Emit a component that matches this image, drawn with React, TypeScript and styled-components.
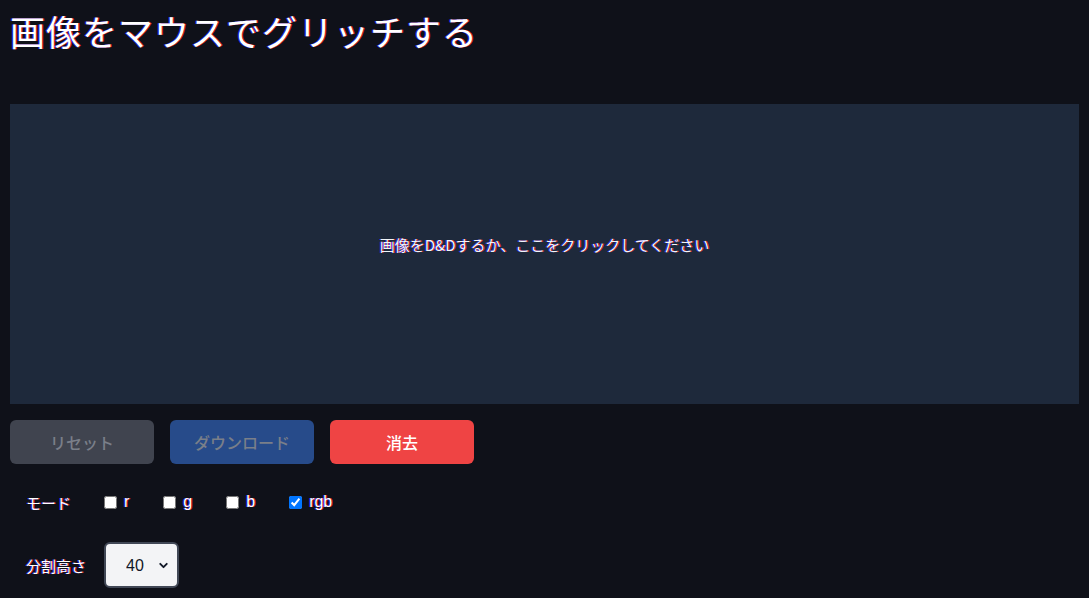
import React, { useState } from "react";
import styled, { createGlobalStyle } from "styled-components";
import { ChevronDown } from "lucide-react";

const Global = createGlobalStyle`
  html, body { margin: 0; padding: 0; background: #0f1119; }
  body {
    font-family: "Noto Sans CJK JP", "Noto Sans", "Liberation Sans", sans-serif;
    color: #ffffff;
  }
  * { box-sizing: border-box; }
`;

const glitch = "-1px 0 rgba(40, 40, 255, 0.85), 1px 0 rgba(255, 30, 30, 0.85)";

const Page = styled.div`
  padding: 10px;
  min-height: 598px;
  background: #0f1119;
`;

const Title = styled.h1`
  margin: 0;
  font-size: 35px;
  line-height: 42px;
  font-weight: 400;
  letter-spacing: 1px;
  color: #ffffff;
  text-shadow: ${glitch};
`;

const DropArea = styled.div`
  margin-top: 52px;
  height: 300px;
  padding-bottom: 20px;
  background: #1e293b;
  display: flex;
  align-items: center;
  justify-content: center;
  cursor: pointer;
`;

const DropText = styled.span`
  font-size: 15px;
  color: #f1f5f9;
  text-shadow: ${glitch};
`;

const ButtonRow = styled.div`
  margin-top: 16px;
  display: flex;
  gap: 16px;
`;

const Button = styled.button<{ $bg: string; $fg: string }>`
  width: 144px;
  height: 44px;
  border: none;
  border-radius: 6px;
  background: ${(p) => p.$bg};
  color: ${(p) => p.$fg};
  font-family: inherit;
  font-size: 16px;
  font-weight: 500;
  cursor: pointer;
`;

const Row = styled.div<{ $top: number; $h: number }>`
  margin-top: ${(p) => p.$top}px;
  height: ${(p) => p.$h}px;
  padding-left: 16px;
  display: flex;
  align-items: center;
`;

const Label = styled.span`
  width: 78px;
  font-size: 15px;
  color: #ffffff;
  text-shadow: ${glitch};
`;

const Checks = styled.div`
  display: flex;
  align-items: center;
  gap: 34px;
`;

const CheckLabel = styled.label`
  display: flex;
  align-items: center;
  gap: 7px;
  font-size: 16px;
  color: #ffffff;
  font-family: "Liberation Sans", "Noto Sans", sans-serif;
  text-shadow: ${glitch};
  cursor: pointer;
`;

const Check = styled.input`
  margin: 0;
  width: 13px;
  height: 13px;
`;

const SelectWrap = styled.div`
  position: relative;
  width: 75px;
  height: 46px;
`;

const Select = styled.select`
  appearance: none;
  width: 100%;
  height: 100%;
  border: 2px solid #414856;
  border-radius: 6px;
  background: #f3f4f6;
  color: #111827;
  padding-left: 20px;
  font-family: "Liberation Sans", "Noto Sans", sans-serif;
  font-size: 16px;
  outline: none;
`;

const Chevron = styled(ChevronDown)`
  position: absolute;
  right: 9px;
  top: 17px;
  width: 13px;
  height: 13px;
  color: #111827;
  pointer-events: none;
`;

export default function App() {
  const [modes, setModes] = useState({ r: false, g: false, b: false, rgb: true });
  const [split, setSplit] = useState("40");
  return (
    <Page>
      <Global />
      <Title>画像をマウスでグリッチする</Title>
      <DropArea>
        <DropText>画像をD&amp;Dするか、ここをクリックしてください</DropText>
      </DropArea>
      <ButtonRow>
        <Button $bg="#40444f" $fg="#7a7f89">リセット</Button>
        <Button $bg="#274b8a" $fg="#7a7f89">ダウンロード</Button>
        <Button $bg="#ef4444" $fg="#ffffff">消去</Button>
      </ButtonRow>
      <Row $top={20} $h={36}>
        <Label>モード</Label>
        <Checks>
          {(["r", "g", "b", "rgb"] as const).map((k) => (
            <CheckLabel key={k}>
              <Check
                type="checkbox"
                checked={modes[k]}
                onChange={() => setModes({ ...modes, [k]: !modes[k] })}
              />
              {k}
            </CheckLabel>
          ))}
        </Checks>
      </Row>
      <Row $top={22} $h={46}>
        <Label>分割高さ</Label>
        <SelectWrap>
          <Select value={split} onChange={(e) => setSplit(e.target.value)}>
            {["10", "20", "30", "40", "50", "60"].map((v) => (
              <option key={v} value={v}>{v}</option>
            ))}
          </Select>
          <Chevron strokeWidth={3.5} />
        </SelectWrap>
      </Row>
    </Page>
  );
}
